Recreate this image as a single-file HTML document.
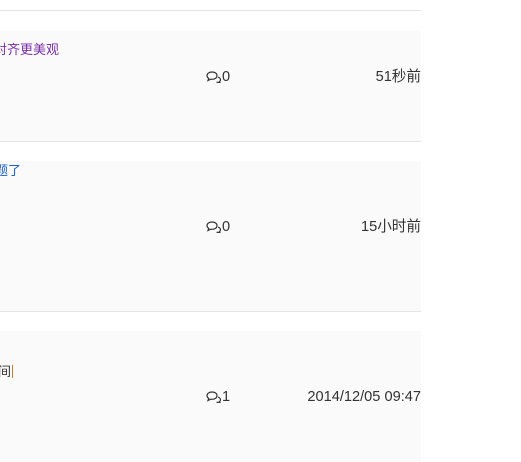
<!DOCTYPE html>
<html><head><meta charset="utf-8"><style>
body{margin:0;width:521px;height:462px;background:#fff;position:relative;overflow:hidden;font-family:"Liberation Sans","Noto Sans CJK SC",sans-serif;font-size:13px;color:#333}
.line{position:absolute;left:0;width:421px;height:1px;background:#e3e3e3}
.box{position:absolute;left:0;width:421px;background:#fafafa}
.t{position:absolute;white-space:nowrap;line-height:16px}
.r{position:absolute;right:100px;white-space:nowrap;line-height:16px;font-size:14.6px}
.c{position:absolute;left:206px;white-space:nowrap;line-height:16px;font-size:14.6px}
svg{vertical-align:-2px}
</style></head><body>
<div class="line" style="top:10px"></div>
<div class="box" style="top:31px;height:110px"></div>
<div class="line" style="top:141px"></div>
<div class="box" style="top:161px;height:150px"></div>
<div class="line" style="top:311px"></div>
<div class="box" style="top:331px;height:131px"></div>

<div class="t" style="left:-6px;top:42px;color:#7a2fa8">对齐更美观</div>
<div class="c" style="top:69px"><svg width="16" height="12" viewBox="0 0 16 12"><path d="M6 1C3 1 1 2.6 1 4.6c0 1.2.7 2.2 1.8 2.8L2 9.5l2.8-1.3c.4.1.8.1 1.2.1 3 0 5-1.6 5-3.7S9 1 6 1z" fill="none" stroke="#333" stroke-width="1.2"/><path d="M12 6c1.5.6 2.5 1.6 2.5 2.8 0 .8-.4 1.4-1 1.9l.6 1.3-2-.8c-.5.1-1 .2-1.6.2" fill="none" stroke="#333" stroke-width="1.2"/></svg>0</div>
<div class="r" style="top:69px">51秒前</div>

<div class="t" style="left:-5px;top:163px;color:#1a5fc8">题了</div>
<div class="c" style="top:219px"><svg width="16" height="12" viewBox="0 0 16 12"><path d="M6 1C3 1 1 2.6 1 4.6c0 1.2.7 2.2 1.8 2.8L2 9.5l2.8-1.3c.4.1.8.1 1.2.1 3 0 5-1.6 5-3.7S9 1 6 1z" fill="none" stroke="#333" stroke-width="1.2"/><path d="M12 6c1.5.6 2.5 1.6 2.5 2.8 0 .8-.4 1.4-1 1.9l.6 1.3-2-.8c-.5.1-1 .2-1.6.2" fill="none" stroke="#333" stroke-width="1.2"/></svg>0</div>
<div class="r" style="top:219px">15小时前</div>

<div class="t" style="left:-2px;top:364px;color:#333">间<span style="display:inline-block;width:1px;height:13px;background:#c08030;vertical-align:-2px;margin-left:1px"></span></div>
<div class="c" style="top:389px"><svg width="16" height="12" viewBox="0 0 16 12"><path d="M6 1C3 1 1 2.6 1 4.6c0 1.2.7 2.2 1.8 2.8L2 9.5l2.8-1.3c.4.1.8.1 1.2.1 3 0 5-1.6 5-3.7S9 1 6 1z" fill="none" stroke="#333" stroke-width="1.2"/><path d="M12 6c1.5.6 2.5 1.6 2.5 2.8 0 .8-.4 1.4-1 1.9l.6 1.3-2-.8c-.5.1-1 .2-1.6.2" fill="none" stroke="#333" stroke-width="1.2"/></svg>1</div>
<div class="r" style="top:389px">2014/12/05 09:47</div>
</body></html>
